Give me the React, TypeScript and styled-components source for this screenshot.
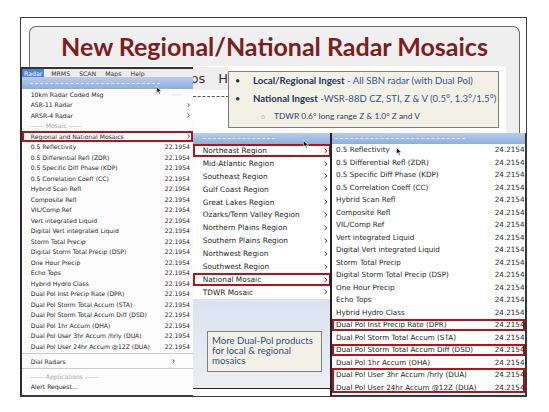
import React from 'react';
import styled, { createGlobalStyle } from 'styled-components';

// Slide: "New Regional/National Radar Mosaics" with cascading radar menus.

const GlobalStyle = createGlobalStyle`
  html, body {
    margin: 0;
    padding: 0;
    background: #ffffff;
  }
  body {
    font-family: "DejaVu Sans", "Liberation Sans", sans-serif;
  }
`;

const Stage = styled.div`
  position: relative;
  width: 549px;
  height: 412px;
  overflow: hidden;
  background: #ffffff;
`;

/* ---------- slide frame ---------- */

const SlideFrame = styled.div`
  box-sizing: border-box;
  margin: 17px 0 0 20px;
  width: 507px;
  height: 380px;
  border: 1px solid #3c3c3c;
  padding: 8px 6px 0 8px;
  display: flex;
`;

const Panel = styled.div`
  flex: 1;
  display: flex;
  flex-direction: column;
  border: 1px solid #6c6c6c;
  border-bottom: none;
  border-radius: 7px 7px 0 0;
  background: #efefef;
`;

const Title = styled.h1`
  margin: 0;
  height: 39px;
  line-height: 39px;
  text-align: center;
  font-family: Lato, "Open Sans", sans-serif;
  font-weight: 700;
  font-size: 25px;
  color: #7b1e1e;
`;

const ContentArea = styled.div`
  flex: 1;
  margin: 0 13px 0 8px;
  background: #ffffff;
  border-radius: 4px 4px 0 0;
`;

/* ---------- desktop windows ---------- */

const Window = styled.div<{ $left: number; $top: number; $width: number; $height: number }>`
  position: absolute;
  box-sizing: border-box;
  left: ${(p) => p.$left}px;
  top: ${(p) => p.$top}px;
  width: ${(p) => p.$width}px;
  height: ${(p) => p.$height}px;
  display: flex;
  flex-direction: column;
  background: #fcfcfc;
  color: #1e1e1e;
  overflow: hidden;
`;

const BackWindow = styled(Window)`
  background: #ffffff;
`;

const BackBar = styled.div`
  height: 23px;
  display: flex;
  align-items: center;
  gap: 13px;
  padding-left: 21px;
  background: #eeeeee;
  font-size: 13px;
  color: #333;
`;

const BackDashes = styled.div`
  margin: 6px 0 0 43px;
  border-top: 1px dashed #555;
  width: 36px;
`;

const LeftMenu = styled(Window)`
  border-top: 2px solid #333;
  border-left: 2px solid #2c2c2c;
  border-bottom: 1px solid #3a3a3a;
  padding-bottom: 3px;
`;

const MiddleMenu = styled(Window)`
  border-bottom: 1px solid #222;
  background: #ffffff;
`;

const RightMenu = styled(Window)`
  border-left: 2px solid #222;
  border-right: 1px solid #333;
  border-bottom: 1px solid #333;
  background: #ffffff;
`;

const MenuBar = styled.div`
  height: 10px;
  display: flex;
  align-items: center;
  gap: 5px;
  background: #ececec;
  font-size: 6.2px;
  color: #333;
`;

const MenuBarItem = styled.span<{ $active?: boolean }>`
  height: 100%;
  display: flex;
  align-items: center;
  padding: 0 2px;
  background: ${(p) => (p.$active ? '#4d86d2' : 'transparent')};
  color: ${(p) => (p.$active ? '#ffffff' : '#333')};
`;

const Tearoff = styled.div<{ $height: number; $dash: number; $indent: number }>`
  flex: none;
  height: ${(p) => p.$height}px;
  display: flex;
  align-items: center;
  padding-left: ${(p) => p.$indent}px;
  background: linear-gradient(#b7cdea, #8eaedb);
  &::after {
    content: '';
    width: ${(p) => p.$dash}px;
    border-top: 1px dashed #dce7f6;
  }
`;

const Row = styled.div<{ $height: number; $size: number; $padL: number; $padR: number }>`
  box-sizing: border-box;
  flex: none;
  height: ${(p) => p.$height}px;
  display: flex;
  align-items: center;
  justify-content: space-between;
  padding: 0 ${(p) => p.$padR}px 0 ${(p) => p.$padL}px;
  font-size: ${(p) => p.$size}px;
  white-space: nowrap;
`;

const Label = styled.span<{ $dim?: boolean }>`
  color: ${(p) => (p.$dim ? '#a8a8a8' : '#1e1e1e')};
`;

const Value = styled.span<{ $tiny?: boolean }>`
  color: ${(p) => (p.$tiny ? '#777' : '#2a2a2a')};
  font-size: ${(p) => (p.$tiny ? '4px' : 'inherit')};
  margin-right: ${(p) => (p.$tiny ? '8px' : '0')};
`;

const Marked = styled.div`
  box-shadow: inset 0 0 0 2px #b3141b;
  display: flex;
  flex-direction: column;
`;

const Separator = styled.div`
  flex: none;
  height: 1px;
  margin: 1.5px 0 2px;
  background: #cacaca;
`;

const Filler = styled.div`
  flex: 1;
  background: linear-gradient(#d9e3f1, #eceef2);
`;

/* ---------- callouts ---------- */

const Callout = styled.div<{ $left: number; $top: number; $width: number; $height: number }>`
  position: absolute;
  box-sizing: border-box;
  left: ${(p) => p.$left}px;
  top: ${(p) => p.$top}px;
  width: ${(p) => p.$width}px;
  height: ${(p) => p.$height}px;
  background: #f3f1e5;
  border: 1px solid #7e7e7e;
  font-family: Lato, "Open Sans", sans-serif;
`;

const IngestList = styled.ul`
  list-style: none;
  margin: 0;
  padding: 2px 0 0 6px;
  display: flex;
  flex-direction: column;
  gap: 4px;
`;

const Bullet = styled.li<{ $sub?: boolean }>`
  display: flex;
  align-items: center;
  height: ${(p) => (p.$sub ? 13 : 14)}px;
  line-height: ${(p) => (p.$sub ? 13 : 14)}px;
  padding-left: ${(p) => (p.$sub ? 26 : 0)}px;
  font-size: ${(p) => (p.$sub ? 8.4 : 9.6)}px;
  color: ${(p) => (p.$sub ? '#2b3f66' : '#33538f')};
  white-space: nowrap;
`;

const Dot = styled.span<{ $sub?: boolean }>`
  width: ${(p) => (p.$sub ? 13 : 18)}px;
  flex: none;
  color: ${(p) => (p.$sub ? '#8b95aa' : '#1c3562')};
  font-size: ${(p) => (p.$sub ? 6 : 9)}px;
`;

const Strong = styled.b`
  color: #1c3562;
  font-weight: 700;
`;

const NoteText = styled.p`
  margin: 0;
  padding: 4px 0 0 4px;
  font-size: 9.6px;
  line-height: 10px;
  color: #2f4e8a;
`;

/* ---------- icons ---------- */

const Chevron: React.FC<{ w: number; h: number }> = ({ w, h }) => (
  <svg width={w} height={h} viewBox="0 0 4 6" style={{ flex: 'none' }}>
    <path d="M0.7 0.6 L3.3 3 L0.7 5.4" fill="none" stroke="#1e1e1e" strokeWidth="1" />
  </svg>
);

const CursorSvg = styled.svg<{ $left: number; $top: number }>`
  position: absolute;
  left: ${(p) => p.$left}px;
  top: ${(p) => p.$top}px;
`;

const Cursor: React.FC<{ x: number; y: number }> = ({ x, y }) => (
  <CursorSvg $left={x} $top={y} width="6" height="9" viewBox="0 0 8 12">
    <path
      d="M0.5 0.5 L0.5 9.5 L2.8 7.4 L4.4 11 L5.8 10.4 L4.3 6.9 L7.3 6.9 Z"
      fill="#111"
      stroke="#fff"
      strokeWidth="0.8"
    />
  </CursorSvg>
);

/* ---------- data ---------- */

const products = [
  '0.5 Reflectivity',
  '0.5 Differential Refl (ZDR)',
  '0.5 Specific Diff Phase (KDP)',
  '0.5 Correlation Coeff (CC)',
  'Hybrid Scan Refl',
  'Composite Refl',
  'VIL/Comp Ref',
  'Vert integrated Liquid',
  'Digital Vert integrated Liquid',
  'Storm Total Precip',
  'Digital Storm Total Precip (DSP)',
  'One Hour Precip',
  'Echo Tops',
  'Hybrid Hydro Class',
  'Dual Pol Inst Precip Rate (DPR)',
  'Dual Pol Storm Total Accum (STA)',
  'Dual Pol Storm Total Accum Diff (DSD)',
  'Dual Pol 1hr Accum (OHA)',
  'Dual Pol User 3hr Accum /hrly (DUA)',
  'Dual Pol User 24hr Accum @12Z (DUA)',
];

const regions = [
  'Northeast Region',
  'Mid-Atlantic Region',
  'Southeast Region',
  'Gulf Coast Region',
  'Great Lakes Region',
  'Ozarks/Tenn Valley Region',
  'Northern Plains Region',
  'Southern Plains Region',
  'Northwest Region',
  'Southwest Region',
  'National Mosaic',
  'TDWR Mosaic',
];
const markedRegions = ['Northeast Region', 'National Mosaic'];

// groups of right-menu rows; groups flagged `marked` get the red outline
const mosaicGroups: { items: string[]; marked: boolean }[] = [
  { items: products.slice(0, 14), marked: false },
  { items: products.slice(14, 15), marked: true },
  { items: products.slice(15, 16), marked: false },
  { items: products.slice(16, 17), marked: true },
  { items: products.slice(17, 18), marked: false },
  { items: products.slice(18, 20), marked: true },
];

/* ---------- menus ---------- */

const leftRow = { $height: 10.5, $size: 6.1, $padL: 8.7, $padR: 3 };

const RadarMenu: React.FC = () => (
  <LeftMenu $left={20} $top={67} $width={173} $height={329}>
    <MenuBar>
      <MenuBarItem $active>Radar</MenuBarItem>
      <MenuBarItem>MRMS</MenuBarItem>
      <MenuBarItem>SCAN</MenuBarItem>
      <MenuBarItem>Maps</MenuBarItem>
      <MenuBarItem>Help</MenuBarItem>
    </MenuBar>
    <Tearoff $height={12} $dash={130} $indent={8} />
    <Row {...leftRow}>
      <Label>10km Radar Coded Msg</Label>
      <Value $tiny>--.----</Value>
    </Row>
    <Row {...leftRow}>
      <Label>ASR-11 Radar</Label>
      <Chevron w={3} h={4.5} />
    </Row>
    <Row {...leftRow}>
      <Label>ARSR-4 Radar</Label>
      <Chevron w={3} h={4.5} />
    </Row>
    <Row {...leftRow}>
      <Label $dim>------ Mosaic ------</Label>
    </Row>
    <Marked>
      <Row {...leftRow}>
        <Label>Regional and National Mosaics</Label>
        <Chevron w={3} h={4.5} />
      </Row>
    </Marked>
    {products.map((name) => (
      <Row key={name} {...leftRow}>
        <Label>{name}</Label>
        <Value>22.1954</Value>
      </Row>
    ))}
    <Separator />
    <Row {...leftRow} $padR={18}>
      <Label>Dial Radars</Label>
      <Chevron w={3} h={4.5} />
    </Row>
    <Separator />
    <Row {...leftRow}>
      <Label $dim>------ Applications ------</Label>
    </Row>
    <Row {...leftRow}>
      <Label>Alert Request...</Label>
    </Row>
  </LeftMenu>
);

const midRow = { $height: 12.9, $size: 7.4, $padL: 9.7, $padR: 3.5 };

const RegionMenu: React.FC = () => (
  <MiddleMenu $left={193} $top={133} $width={138} $height={256}>
    <Tearoff $height={11} $dash={72} $indent={10} />
    {regions.map((name) => {
      const row = (
        <Row key={name} {...midRow}>
          <Label>{name}</Label>
          <Chevron w={3.6} h={5.6} />
        </Row>
      );
      return markedRegions.includes(name) ? <Marked key={name}>{row}</Marked> : row;
    })}
    <Filler />
  </MiddleMenu>
);

const rightRow = { $height: 12.49, $size: 7.2, $padL: 4, $padR: 0.5 };

const MosaicMenu: React.FC = () => (
  <RightMenu $left={330} $top={133} $width={196} $height={263}>
    <Tearoff $height={10.75} $dash={130} $indent={3} />
    {mosaicGroups.map((group) => {
      const rows = group.items.map((name) => (
        <Row key={name} {...rightRow}>
          <Label>{name}</Label>
          <Value>24.2154</Value>
        </Row>
      ));
      return group.marked ? <Marked key={group.items[0]}>{rows}</Marked> : rows;
    })}
  </RightMenu>
);

export default function App() {
  return (
    <>
      <GlobalStyle />
      <Stage>
        <SlideFrame>
          <Panel>
            <Title>New Regional/National Radar Mosaics</Title>
            <ContentArea />
          </Panel>
        </SlideFrame>

        <BackWindow $left={150} $top={67} $width={78} $height={66}>
          <BackBar>
            <span>Maps</span>
            <span>Help</span>
          </BackBar>
          <BackDashes />
        </BackWindow>

        <RadarMenu />
        <RegionMenu />
        <MosaicMenu />

        <Callout $left={228} $top={71} $width={271} $height={57}>
          <IngestList>
            <Bullet>
              <Dot>•</Dot>
              <Strong>Local/Regional Ingest</Strong>&nbsp;- All SBN radar (with Dual Pol)
            </Bullet>
            <Bullet>
              <Dot>•</Dot>
              <Strong>National Ingest</Strong>&nbsp;-WSR-88D CZ, STI, Z &amp; V (0.5°, 1.3°/1.5°)
            </Bullet>
            <Bullet $sub>
              <Dot $sub>○</Dot>
              TDWR 0.6° long range Z &amp; 1.0° Z and V
            </Bullet>
          </IngestList>
        </Callout>

        <Callout $left={207} $top={331} $width={115} $height={41}>
          <NoteText>
            More Dual-Pol products
            <br />
            for local &amp; regional
            <br />
            mosaics
          </NoteText>
        </Callout>

        <Cursor x={156} y={86} />
        <Cursor x={303} y={140} />
        <Cursor x={396} y={147} />
      </Stage>
    </>
  );
}
